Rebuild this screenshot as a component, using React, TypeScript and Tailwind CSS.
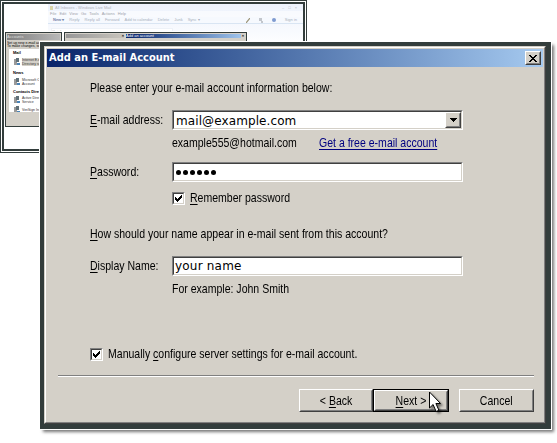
import React from 'react';

const label = 'font-["Liberation_Sans",Arial,sans-serif] text-[13px] leading-[16px] text-black whitespace-nowrap';
const sunken = 'border border-t-[#808080] border-l-[#808080] border-r-white border-b-white';
const sunkenInner = 'h-full w-full border border-t-[#404040] border-l-[#404040] border-r-[#d4d0c8] border-b-[#d4d0c8] bg-white';
const fieldText = 'font-["DejaVu_Sans",sans-serif] text-[12px] tracking-[0.1px] leading-[16px] whitespace-nowrap';
const raised = 'border border-t-white border-l-white border-r-[#404040] border-b-[#404040]';
const raisedInner = 'flex h-full w-full items-center justify-center border border-t-[#d4d0c8] border-l-[#d4d0c8] border-r-[#808080] border-b-[#808080] bg-[#d4d0c8]';

function Key({ children }: { children: string }) {
  return <span className="underline underline-offset-2">{children}</span>;
}

/* Condensed dialog lettering */
function T({ children, className = '' }: { children: React.ReactNode; className?: string }) {
  return <span className={`block w-max origin-left scale-x-[0.81] ${className}`}>{children}</span>;
}

function ButtonText({ children }: { children: React.ReactNode }) {
  return <span className="block scale-x-[0.81]">{children}</span>;
}

function Field({ children }: { children: React.ReactNode }) {
  return (
    <div className={`h-5 w-[291px] shrink-0 ${sunken}`}>
      <div className={`flex items-center pl-[2px] ${sunkenInner}`}>{children}</div>
    </div>
  );
}

function Check() {
  return (
    <div className={`h-[13px] w-[13px] shrink-0 ${sunken}`}>
      <div className={sunkenInner}>
        <svg className="block" width="9" height="9" viewBox="0 0 9 9" shapeRendering="crispEdges">
          <path d="M1 3h1v1h1v1h1v-1h1v-1h1v-1h1v-1h1v3h-1v1h-1v1h-1v1h-1v1h-1v-1h-1v-1h-1z" />
        </svg>
      </div>
    </div>
  );
}

function Thumb() {
  const items = [
    ['Internet E-mail', 'Directory service'],
    ['Microsoft Comm', 'Account'],
    ['Active Directory', 'Service'],
    ['VeriSign Internet', ''],
  ];
  const item = (i: number) => (
    <div className="flex h-[10px] items-center gap-[2px] pl-[5px]">
      <svg width="6" height="8" viewBox="0 0 6 8"><path d="M0 1h3v6h-3z" fill="#999" /><path d="M2 0h3v4h-3z" fill="#607078" /><path d="M3 5h3v2h-3z" fill="#4a84b8" /></svg>
      <div className={`text-[3.5px] leading-[4px] whitespace-nowrap text-[#333] ${i === 0 ? 'bg-[#d4d0c8]' : ''}`}><div>{items[i][0]}</div><div>{items[i][1]}</div></div>
    </div>
  );
  const head = (t: string) => <div className="pl-[4px] text-[4px] leading-[5px] font-bold whitespace-nowrap text-black">{t}</div>;
  return (
    <div className='relative h-[153px] w-[307px] border border-[#333d3c] bg-white p-px font-["Liberation_Sans",sans-serif]'>
      <div className="h-full w-full border-2 border-[#333d3c] bg-white pl-[44px]">
        <div className="h-full bg-linear-to-b from-[#edf2fc] to-white to-30%">
          <div className="flex h-[7px] items-center justify-between pr-[6px] pl-[2px] text-[4px] leading-[7px] text-[#b0b4bc]">
            <span className="flex items-center gap-[2px]"><span className="h-1 w-[3px] bg-[#d8d4a8]" />All Inboxes - Windows Live Mail</span>
            <span className="flex gap-[4px]"><span>–</span><span>□</span><span>×</span></span>
          </div>
          <div className="flex h-[6px] gap-[3px] bg-white/50 pl-[2px] text-[4px] leading-[6px] text-[#a0a4ac]">
            <span>File</span><span>Edit</span><span>View</span><span>Go</span><span>Tools</span><span>Actions</span><span>Help</span>
          </div>
          <div className="flex h-[7px] items-center gap-[5px] border-b border-[#d9e5f3] bg-[#f6f9fe] pr-[6px] pl-[5px] text-[4px] leading-[6px] whitespace-nowrap text-[#a8b0bd]">
            <b className="text-[#7484a8]">New ▾</b><span>Reply</span><span>Reply all</span><span>Forward</span><span>Add to calendar</span><span>Delete</span><span>Junk</span><span>Sync ▾</span>
            <span className="ml-auto flex items-center gap-[9px]">
              <svg width="4" height="5" viewBox="0 0 4 5"><path d="M0 5l4-5" stroke="#9c9478" strokeWidth="1.2" /></svg>
              <svg width="4" height="5" viewBox="0 0 4 5"><path d="M0 0h3v3h-3zM2 3h2v2h-2z" fill="#c2c6cc" /></svg>
              <span className="h-1 w-1 rounded-full bg-[#7f9bd0]" />
              <span>Sign in</span>
            </span>
          </div>
          <div className="mt-[4px] ml-[3px] w-[122px] border border-[#eef2f8] bg-white text-[4px] leading-[5px] text-[#a4a8b0]">Quick views</div>
        </div>
      </div>
      <div className="absolute top-[31px] left-[4px] h-[95px] w-[57px] border border-[#333d3c] bg-[#d4d0c8] p-px outline outline-white">
        <div className="h-full overflow-hidden">
          <div className="h-[6px] bg-linear-to-r from-[#808080] to-[#b8b8b8] text-[4px] leading-[6px] text-[#ddd]">Accounts</div>
          <div className="mt-[2px] text-[3.5px] leading-[3px] whitespace-nowrap text-black"><div>Set up new e-mail accounts</div><div>To make changes, select an</div></div>
          <div className="mt-px ml-[2px] h-[63px] overflow-hidden bg-white pt-px">
            {head('Mail')}<div className="h-[2px]" />{item(0)}<div className="h-[3px]" />{head('News')}<div className="h-[2px]" />{item(1)}<div className="h-[2px]" />{head('Contacts Directory')}<div className="h-px" />{item(2)}{item(3)}
          </div>
        </div>
      </div>
      <div className="absolute top-[31px] left-[63px] h-[20px] w-[183px] border border-[#333d3c] bg-[#d4d0c8] p-px outline outline-white">
        <div className="flex h-[4px] gap-[2px]">
          <div className="flex w-[58px] justify-end bg-linear-to-r from-[#989898] to-[#c8c4bc] text-[4px] leading-[4px] font-bold">×</div>
          <div className="flex flex-1 justify-between bg-linear-to-r from-[#0a246a] to-[#a6caf0] text-[4px] leading-[4px] text-white"><span>Add an account</span><span className="bg-[#d4d0c8] px-px font-bold text-black">×</span></div>
        </div>
      </div>
    </div>
  );
}

export default function App() {
  return (
    <div className="relative h-[443px] w-[557px] overflow-hidden bg-white">
      <Thumb />
      <div className="absolute top-[42px] left-[40px] h-[387px] w-[511px] border-t-4 border-r-[5px] border-b-[5px] border-l-4 border-[#333d3c] shadow-[0_0_0_1px_#fff,3px_3px_3px_0px_#777]">
        <div className="h-full border border-t-[#d4d0c8] border-r-[#404040] border-b-[#404040] border-l-[#d4d0c8] bg-[#d4d0c8]">
          <div className="h-full border border-t-white border-r-[#808080] border-b-[#808080] border-l-white px-px pt-px">
            <div className="flex h-[18px] items-center justify-between bg-linear-to-r from-[#0a246a] to-[#a6caf0] pr-[2px] pl-[2px]">
              <span className='font-["DejaVu_Sans_Condensed","DejaVu_Sans",sans-serif] text-[11px] leading-[18px] font-bold whitespace-nowrap text-white'>Add an E-mail Account</span>
              <div className={`h-[14px] w-4 ${raised}`}><div className={raisedInner}>
                <svg width="8" height="7" viewBox="0 0 8 7" shapeRendering="crispEdges"><path d="M0 0h2v1h1v1h2v-1h1v-1h2v1h-1v1h-1v1h-1v1h1v1h1v1h1v1h-2v-1h-1v-1h-2v1h-1v1h-2v-1h1v-1h1v-1h1v-1h-1v-1h-1v-1h-1z" /></svg>
              </div></div>
            </div>
            <div className={`pt-[13px] pr-[9px] pl-[43px] ${label}`}>
              <T>Please enter your e-mail account information below:</T>
              <div className="mt-[14px] flex h-5 items-center"><div className="w-[82px]"><T><Key>E</Key>-mail address:</T></div>
                <Field><span className={`${fieldText} flex-1 pt-[2px]`}>mail@example.com</span>
                  <div className={`h-4 w-4 ${raised}`}><div className={raisedInner}><svg width="7" height="4" viewBox="0 0 7 4" shapeRendering="crispEdges"><path d="M0 0h7v1h-1v1h-1v1h-1v1h-1v-1h-1v-1h-1v-1h-1z" /></svg></div></div>
                </Field>
              </div>
              <div className="mt-[5px] flex pl-[82px]"><div className="w-[147px]"><T>example555@hotmail.com</T></div><T className="text-[#000080] underline underline-offset-2">Get a free e-mail account</T></div>
              <div className="mt-[11px] flex h-5 items-center"><div className="w-[82px]"><T><Key>P</Key>assword:</T></div>
                <Field><div className="flex gap-[2px]">{[0, 1, 2, 3, 4, 5].map((i) => <span key={i} className="h-[5px] w-[5px] rounded-full bg-black" />)}</div></Field>
              </div>
              <div className="mt-[8px] flex h-[16px] items-center gap-[5px] pl-[82px]"><Check /><T><Key>R</Key>emember password</T></div>
              <T className="mt-[20px]"><Key>H</Key>ow should your name appear in e-mail sent from this account?</T>
              <div className="mt-[14px] flex h-5 items-center"><div className="w-[82px]"><T><Key>D</Key>isplay Name:</T></div><Field><span className={`${fieldText} -ml-px tracking-[0.2px]`}>your name</span></Field></div>
              <div className="mt-[5px] pl-[82px]"><T>For example: John Smith</T></div>
              <div className="mt-[49px] flex h-[16px] items-center gap-[5px]"><Check /><T>Manually <Key>c</Key>onfigure server settings for e-mail account.</T></div>
              <div className="mt-[13px] -ml-[32px] h-[2px] border-t border-b border-t-[#808080] border-b-white" />
              <div className="mt-[12px] flex h-[23px] justify-end">
                <div className={`w-[74px] ${raised}`}><div className={raisedInner}><ButtonText>&lt; <Key>B</Key>ack</ButtonText></div></div>
                <div className="mr-[10px] w-[76px] border border-black"><div className={`h-full ${raised}`}><div className={raisedInner}><ButtonText><Key>N</Key>ext &gt;</ButtonText></div></div></div>
                <div className={`w-[75px] ${raised}`}><div className={raisedInner}><ButtonText>Cancel</ButtonText></div></div>
              </div>
            </div>
          </div>
        </div>
      </div>
      <svg className="absolute top-[391px] left-[428px] drop-shadow-[2px_2px_1px_rgba(0,0,0,0.5)]" width="14" height="22" viewBox="0 0 14 22"><path d="M1.5 1v16l3.6-3.5 3 7 2.8-1.2-3-6.8h4.6z" fill="white" stroke="black" /></svg>
    </div>
  );
}
